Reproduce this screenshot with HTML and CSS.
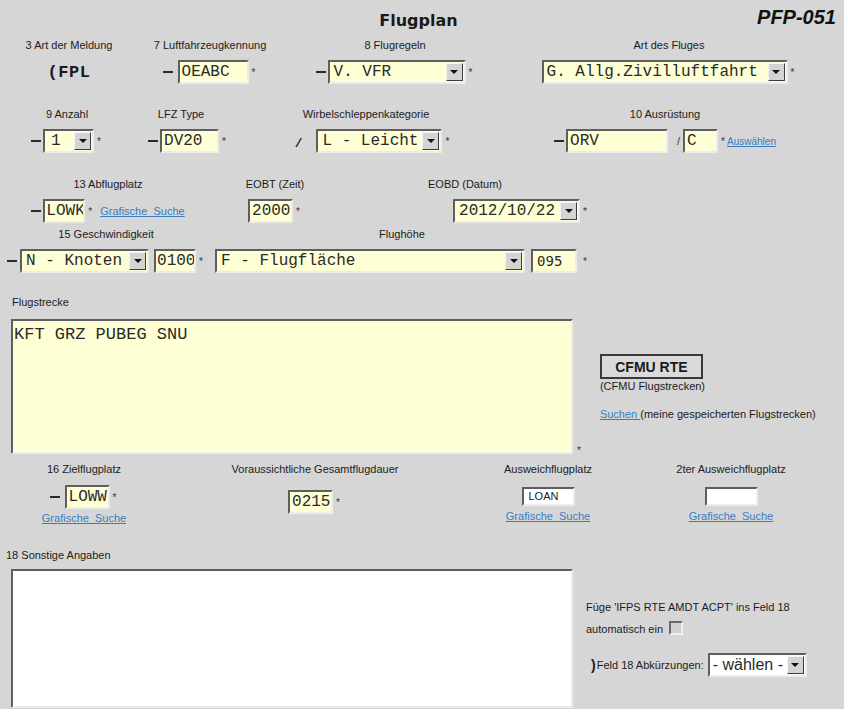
FILE: index.html
```html
<!DOCTYPE html>
<html lang="de">
<head>
<meta charset="utf-8">
<title>Flugplan</title>
<link rel="stylesheet" href="styles.css">
</head>
<body>
<div class="page">
  <header class="head">
    <h1 class="title">Flugplan</h1>
    <div class="code">PFP-051</div>
  </header>

  <div class="row r1">
    <div class="cell c1-1">
      <div class="lbl">3 Art der Meldung</div>
      <div class="ctl"><span class="fpl">(FPL</span></div>
    </div>
    <div class="cell c1-2">
      <div class="lbl">7 Luftfahrzeugkennung</div>
      <div class="ctl"><span class="dash"></span><span class="inp i-kenn">OEABC</span><span class="req">*</span></div>
    </div>
    <div class="cell c1-3">
      <div class="lbl">8 Flugregeln</div>
      <div class="ctl"><span class="dash tight"></span><span class="sel s-regeln"><span class="sv">V. VFR</span><span class="dd"></span></span><span class="req">*</span></div>
    </div>
    <div class="cell c1-4">
      <div class="lbl">Art des Fluges</div>
      <div class="ctl"><span class="sel s-art"><span class="sv">G. Allg.Zivilluftfahrt</span><span class="dd"></span></span><span class="req">*</span></div>
    </div>
  </div>

  <div class="row r2">
    <div class="cell c2-1">
      <div class="lbl">9 Anzahl</div>
      <div class="ctl"><span class="dash tight"></span><span class="sel s-anz"><span class="sv">1</span><span class="dd"></span></span><span class="req">*</span></div>
    </div>
    <div class="cell c2-2">
      <div class="lbl">LFZ Type</div>
      <div class="ctl shift-r"><span class="dash tight"></span><span class="inp i-type">DV20</span><span class="req">*</span></div>
    </div>
    <div class="cell c2-3">
      <div class="lbl">Wirbelschleppenkategorie</div>
      <div class="ctl shift-r"><span class="slash">/</span><span class="sel s-wirb"><span class="sv">L - Leicht</span><span class="dd"></span></span><span class="req">*</span></div>
    </div>
    <div class="cell c2-4">
      <div class="lbl">10 Ausrüstung</div>
      <div class="ctl"><span class="dash tight"></span><span class="inp i-ausr">ORV</span><span class="sep">/</span><span class="inp i-c">C</span><span class="req">*</span><a class="lnk small" href="#">Auswählen</a></div>
    </div>
  </div>

  <div class="row r3">
    <div class="cell c3-1">
      <div class="lbl">13 Abflugplatz</div>
      <div class="ctl"><span class="dash tight"></span><span class="inp i-4">LOWK</span><span class="req">*</span><a class="lnk gap" href="#">Grafische&nbsp; Suche</a></div>
    </div>
    <div class="cell c3-2">
      <div class="lbl">EOBT (Zeit)</div>
      <div class="ctl"><span class="inp i-4b">2000</span><span class="req">*</span></div>
    </div>
    <div class="cell c3-3">
      <div class="lbl">EOBD (Datum)</div>
      <div class="ctl date-ctl"><span class="sel s-date"><span class="sv">2012/10/22</span><span class="dd"></span></span><span class="req">*</span></div>
    </div>
  </div>

  <div class="row r4">
    <div class="cell c4-1">
      <div class="lbl">15 Geschwindigkeit</div>
      <div class="ctl"><span class="dash"></span><span class="sel s-knot"><span class="sv">N - Knoten</span><span class="dd"></span></span><span class="inp i-4 ml5">0100</span><span class="req">*</span></div>
    </div>
    <div class="cell c4-2">
      <div class="lbl">Flughöhe</div>
      <div class="ctl"><span class="sel s-fl"><span class="sv">F - Flugfläche</span><span class="dd"></span></span><span class="inp i-095">095</span><span class="req wide">*</span></div>
    </div>
  </div>

  <div class="blocklbl route-lbl">Flugstrecke</div>
  <div class="area-row route">
    <div class="ta ta-route">KFT GRZ PUBEG SNU</div>
    <span class="req bottom">*</span>
    <div class="side">
      <button class="cfmu" type="button">CFMU RTE</button>
      <div class="sidetxt">(CFMU Flugstrecken)</div>
      <div class="sidetxt search"><a class="lnk" href="#">Suchen </a>(meine gespeicherten Flugstrecken)</div>
    </div>
  </div>

  <div class="row r5">
    <div class="cell c5-1">
      <div class="lbl">16 Zielflugplatz</div>
      <div class="ctl ctl5"><span class="dash"></span><span class="inp i-4c">LOWW</span><span class="req">*</span></div>
      <a class="lnk sub" href="#">Grafische&nbsp; Suche</a>
    </div>
    <div class="cell c5-2">
      <div class="lbl">Voraussichtliche Gesamtflugdauer</div>
      <div class="ctl ctl5b"><span class="inp i-4c">0215</span><span class="req">*</span></div>
    </div>
    <div class="cell c5-3">
      <div class="lbl">Ausweichflugplatz</div>
      <span class="winp">LOAN</span>
      <a class="lnk sub2" href="#">Grafische&nbsp; Suche</a>
    </div>
    <div class="cell c5-4">
      <div class="lbl">2ter Ausweichflugplatz</div>
      <span class="winp"></span>
      <a class="lnk sub2" href="#">Grafische&nbsp; Suche</a>
    </div>
  </div>

  <div class="blocklbl other-lbl">18 Sonstige Angaben</div>
  <div class="area-row other">
    <div class="ta ta-other"></div>
    <div class="side2">
      <div class="line1">Füge 'IFPS RTE AMDT ACPT' ins Feld 18</div>
      <div class="line2"><span>automatisch ein</span><span class="chk"></span></div>
      <div class="line3"><span class="paren">)</span><span class="abk">Feld 18 Abkürzungen:</span><span class="sel s-waehl"><span class="sv">- wählen -</span><span class="dd"></span></span></div>
    </div>
  </div>
</div>
</body>
</html>
```

FILE: styles.css
```css
* { box-sizing: border-box; }

body {
  margin: 0;
  background: #ffffff;
  font-family: "Liberation Sans", Arial, sans-serif;
  font-size: 11px;
  color: #1c1c1c;
}

.page {
  width: 844px;
  height: 709px;
  background: #d6d6d6;
  overflow: hidden;
}

/* header */
.head {
  display: grid;
  grid-template-columns: 1fr auto 1fr;
  align-items: start;
  height: 39px;
}
.title {
  grid-column: 2;
  margin: 12px 7px 0 0;
  font: bold 16px/18px "DejaVu Sans", sans-serif;
  color: #1a1a1a;
}
.code {
  justify-self: end;
  margin: 6px 8px 0 0;
  font: italic bold 20px/22px "Liberation Sans", Arial, sans-serif;
  color: #111;
}

/* rows & cells */
.row { display: flex; }
.cell {
  display: flex;
  flex-direction: column;
  align-items: center;
  flex: none;
}
.lbl {
  height: 13px;
  line-height: 13px;
  white-space: nowrap;
}
.ctl {
  display: flex;
  align-items: center;
  height: 24px;
  margin-top: 8px;
  white-space: nowrap;
}

.r2 { margin-top: 24px; }
.r3 { margin-top: 25px; }
.r4 { margin-top: 5px; }

.c1-1 { width: 138px; }
.c1-2 { width: 144px; }
.c1-3 { width: 226px; }
.c1-4 { width: 322px; }

.c2-1 { width: 134px; }
.c2-2 { width: 94px; }
.c2-3 { width: 276px; }
.c2-4 { width: 322px; }
.shift-r { padding-left: 14px; }

.c3-1 { width: 216px; }
.c3-2 { width: 118px; }
.c3-3 { width: 262px; }
.date-ctl { padding-left: 112px; }

.c4-1 { width: 212px; }
.c4-2 { width: 380px; }

/* glyph helpers */
.dash {
  display: inline-block;
  width: 10px;
  height: 2px;
  background: #2a2a2a;
  margin-right: 5px;
}
.dash.tight { margin-right: 2px; }
.slash {
  font: bold 13px "Liberation Mono", monospace;
  margin-right: 14px;
  margin-top: 4px;
  color: #222;
}
.sep {
  font-size: 11px;
  margin: 0 3px 0 9px;
  color: #333;
}
.fpl {
  font: bold 17px "Liberation Mono", monospace;
  letter-spacing: 0.5px;
  color: #1a1a1a;
}
.req {
  font-size: 10px;
  margin-left: 3px;
  margin-right: 2px;
  color: #333;
}
.req.wide { margin-left: 6px; }
.req.bottom { align-self: flex-end; margin: 0 0 -2px 4px; }

/* text inputs */
.inp {
  display: inline-block;
  height: 24px;
  background: #ffffd6;
  border: 2px solid;
  border-color: #5e5e5e #ececec #ececec #5e5e5e;
  font: 16px/20px "Liberation Mono", monospace;
  padding: 0 2px;
  color: #2a2a2a;
  overflow: hidden;
}
.i-kenn { width: 71px; }
.i-type { width: 59px; }
.i-ausr { width: 102px; }
.i-c { width: 35px; }
.i-4 { width: 42px; padding: 0 1px; }
.i-4b { width: 45px; padding: 0 2px; }
.i-4c { width: 45px; padding: 0 2px; }
.i-095 {
  width: 46px;
  margin-left: 6px;
  font: 14px/20px "DejaVu Sans Mono", monospace;
  padding-left: 4px;
}
.ml5 { margin-left: 5px; }

/* fake selects */
.sel {
  display: inline-flex;
  height: 24px;
  background: #ffffd6;
  border: 2px solid;
  border-color: #5e5e5e #ececec #ececec #5e5e5e;
}
.sv {
  flex: 1;
  padding-left: 4px;
  font: 16px/20px "Liberation Mono", monospace;
  color: #2a2a2a;
  white-space: pre;
  overflow: hidden;
}
.dd {
  flex: none;
  width: 17px;
  height: 18px;
  margin: 1px 1px 1px 0;
  background: #d4d4d4;
  border: 1px solid;
  border-color: #f4f4f4 #3c3c3c #3c3c3c #f4f4f4;
  display: flex;
  align-items: center;
  justify-content: center;
}
.dd::after {
  content: "";
  border-left: 4px solid transparent;
  border-right: 4px solid transparent;
  border-top: 4px solid #111;
}
.s-regeln { width: 138px; }
.s-art { width: 246px; }
.s-art .sv { padding-left: 3px; }
.s-anz { width: 51px; }
.s-anz .sv { padding-left: 6px; }
.s-wirb { width: 126px; }
.s-date { width: 127px; }
.s-knot { width: 129px; margin-left: -2px; }
.s-fl { width: 310px; }
.s-waehl { width: 99px; background: #fff; }
.s-waehl .sv {
  font: 16px/20px "Liberation Sans", Arial, sans-serif;
  padding-left: 3px;
}

/* links */
.lnk {
  color: #3a7cc2;
  text-decoration: underline;
  font-size: 11px;
}
.lnk.small { font-size: 10px; }
.lnk.gap { margin-left: 6px; }

/* route block */
.blocklbl {
  height: 13px;
  line-height: 13px;
}
.route-lbl { margin: 23px 0 0 12px; }
.area-row { display: flex; }
.route { margin-top: 10px; }
.ta {
  flex: none;
  width: 562px;
  margin-left: 11px;
  border: 2px solid;
  border-color: #5e5e5e #ececec #ececec #5e5e5e;
}
.ta-route {
  height: 135px;
  background: #ffffd6;
  font: 17px/20px "Liberation Mono", monospace;
  padding: 4px 1px;
  color: #2a2a2a;
}
.side {
  margin-left: 19px;
  padding-top: 35px;
}
.cfmu {
  display: block;
  width: 103px;
  height: 25px;
  padding: 0;
  background: #dadada;
  border: 2px solid #3a3a3a;
  font: bold 14px "Liberation Sans", Arial, sans-serif;
  color: #1a1a1a;
}
.sidetxt {
  line-height: 13px;
  margin-top: 1px;
  white-space: nowrap;
}
.sidetxt.search { margin-top: 15px; }

/* row 5 */
.r5 {
  margin-top: 9px;
  height: 86px;
}
.c5-1 { width: 168px; }
.c5-2 { width: 294px; }
.c5-3 { width: 172px; }
.c5-4 { width: 194px; }
.ctl5 { margin-top: 9px; }
.ctl5b { margin-top: 14px; }
.lnk.sub { margin-top: 3px; line-height: 13px; }
.lnk.sub2 { margin-top: 4px; line-height: 13px; }
.winp {
  display: block;
  width: 53px;
  height: 19px;
  margin-top: 11px;
  background: #fff;
  border: 2px solid;
  border-color: #5e5e5e #ececec #ececec #5e5e5e;
  font-size: 11px;
  line-height: 15px;
  padding-left: 5px;
  color: #222;
}

/* other block */
.other-lbl { margin-left: 6px; }
.other { margin-top: 7px; }
.ta-other {
  height: 139px;
  background: #ffffff;
}
.side2 {
  margin-left: 13px;
  padding-top: 32px;
}
.line1 { line-height: 13px; white-space: nowrap; }
.line2 {
  display: flex;
  align-items: flex-end;
  margin-top: 7px;
  height: 14px;
}
.chk {
  display: inline-block;
  width: 14px;
  height: 14px;
  margin-left: 6px;
  border: 2px solid;
  border-color: #6a6a6a #efefef #efefef #6a6a6a;
  background: #d0d0d0;
}
.line3 {
  display: flex;
  align-items: center;
  margin-top: 18px;
  padding-left: 5px;
}
.paren {
  font: bold 14px "Liberation Sans", Arial, sans-serif;
  margin-right: 1px;
}
.abk {
  font-size: 11px;
  margin-right: 4px;
}
```
